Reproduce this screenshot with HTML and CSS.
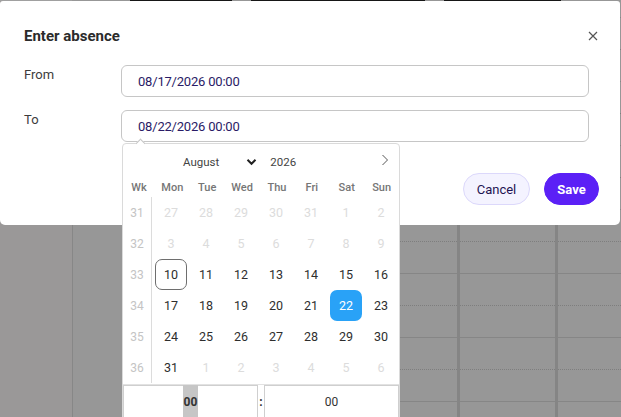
FILE: index.html
```html
<!DOCTYPE html>
<html lang="en">
<head>
<meta charset="UTF-8" />
<meta name="viewport" content="width=device-width, initial-scale=1" />
<title>Enter absence</title>
<link rel="stylesheet" href="styles.css">
</head>
<body>
  <!-- Planner behind the modal -->
  <div class="planner">
    <div class="planner-top">
      <span class="seg seg-light" style="width:72px"></span>
      <span class="seg" style="width:58px"></span>
      <span class="seg seg-dark" style="width:102px"></span>
      <span class="seg" style="width:19px"></span>
      <span class="seg seg-dark" style="width:174px"></span>
      <span class="seg" style="width:19px"></span>
      <span class="seg seg-dark" style="width:117px"></span>
      <span class="seg" style="flex:1"></span>
    </div>
    <div class="planner-body">
      <div class="time-col"></div>
      <div class="day-col day-col-wide">
        <div class="day-blank"></div>
        <div class="day-lines">
          <div class="hour hour-first"></div>
          <div class="hour"></div>
          <div class="hour"></div>
          <div class="hour"></div>
          <div class="hour"></div>
          <div class="hour"></div>
          <div class="hour"></div>
        </div>
      </div>
      <div class="day-col day-col-mid">
        <div class="day-lines">
          <div class="hour hour-first"></div>
          <div class="hour"></div>
          <div class="hour"></div>
          <div class="hour"></div>
          <div class="hour"></div>
          <div class="hour"></div>
          <div class="hour"></div>
        </div>
      </div>
      <div class="day-col day-col-last">
        <div class="day-lines">
          <div class="hour hour-first"></div>
          <div class="hour"></div>
          <div class="hour"></div>
          <div class="hour"></div>
          <div class="hour"></div>
          <div class="hour"></div>
          <div class="hour"></div>
        </div>
      </div>
    </div>
  </div>

  <!-- Modal -->
  <div class="dialog">
    <div class="dialog-header">
      <h2 class="dialog-title">Enter absence</h2>
      <button class="close-btn" aria-label="Close">
        <svg width="10" height="10" viewBox="0 0 10 10"><path d="M1 1L9 9M9 1L1 9" stroke="#555" stroke-width="1.2" fill="none"/></svg>
      </button>
    </div>

    <div class="form">
      <div class="form-row">
        <label class="form-label">From</label>
        <div class="date-input">08/17/2026 00:00</div>
      </div>
      <div class="form-row">
        <label class="form-label">To</label>
        <div class="date-input">08/22/2026 00:00</div>
      </div>
    </div>

    <div class="dialog-footer">
      <button class="btn btn-cancel">Cancel</button>
      <button class="btn btn-save">Save</button>
    </div>
  </div>

  <!-- Date picker popup -->
  <div class="picker">
    <div class="picker-head">
      <div class="month-select">
        <span>August</span>
        <svg width="11" height="8" viewBox="0 0 11 8"><path d="M1.5 1.8L5.5 5.8L9.5 1.8" stroke="#222" stroke-width="2" fill="none"/></svg>
      </div>
      <div class="year">2026</div>
      <svg class="next" width="8" height="12" viewBox="0 0 8 12"><path d="M1.5 1L6.5 6L1.5 11" stroke="#555" stroke-width="1" fill="none"/></svg>
    </div>

    <div class="weekdays">
      <span class="wk">Wk</span>
      <span>Mon</span><span>Tue</span><span>Wed</span><span>Thu</span><span>Fri</span><span>Sat</span><span>Sun</span>
    </div>

    <div class="weeks">
      <div class="week-nums">
        <span>31</span><span>32</span><span>33</span><span>34</span><span>35</span><span>36</span>
      </div>
      <div class="days">
        <span class="off">27</span><span class="off">28</span><span class="off">29</span><span class="off">30</span><span class="off">31</span><span class="off">1</span><span class="off">2</span>
        <span class="off">3</span><span class="off">4</span><span class="off">5</span><span class="off">6</span><span class="off">7</span><span class="off">8</span><span class="off">9</span>
        <span class="today">10</span><span>11</span><span>12</span><span>13</span><span>14</span><span>15</span><span>16</span>
        <span>17</span><span>18</span><span>19</span><span>20</span><span>21</span><span class="selected">22</span><span>23</span>
        <span>24</span><span>25</span><span>26</span><span>27</span><span>28</span><span>29</span><span>30</span>
        <span>31</span><span class="off">1</span><span class="off">2</span><span class="off">3</span><span class="off">4</span><span class="off">5</span><span class="off">6</span>
      </div>
    </div>

    <div class="time-row">
      <div class="time-box"><span class="time-hl">00</span></div>
      <span class="colon">:</span>
      <div class="time-box">00</div>
    </div>
  </div>
</body>
</html>
```

FILE: styles.css
```css
* {
  box-sizing: border-box;
}
body {
  margin: 0;
  width: 621px;
  height: 417px;
  overflow: hidden;
  background-color: #979797;
  font-family: Roboto, 'Liberation Sans', sans-serif;
  color: #333;
  position: relative;
}

/* planner in the background */
.planner {
  display: flex;
  flex-direction: column;
  height: 100%;
}
.planner-top {
  display: flex;
  height: 1px;
}
.seg {
  background-color: #979797;
}
.seg-light {
  background-color: #a0a0a0;
}
.seg-dark {
  background-color: #161616;
}
.planner-body {
  flex: 1;
  display: flex;
}
.time-col {
  width: 73px;
  background-color: #9a9898;
  border-right: 1px solid #878787;
}
.day-col {
  display: flex;
}
.day-col-wide {
  width: 384px;
}
.day-col-mid {
  width: 98px;
  border-left: 3px solid #858585;
}
.day-col-last {
  flex: 1;
  border-left: 3px solid #858585;
}
.day-blank {
  width: 49px;
}
.day-lines {
  flex: 1;
  display: flex;
  flex-direction: column;
}
.hour {
  height: 64px;
  border-bottom: 1px solid #868686;
  position: relative;
}
.hour::after {
  content: '';
  position: absolute;
  left: 0;
  right: 0;
  top: 31px;
  border-top: 1px dotted #7e7e7e;
}
.hour-first {
  height: 17px;
}
.hour-first::after {
  display: none;
}

/* modal */
.dialog {
  position: absolute;
  top: 1px;
  left: 0;
  width: 620px;
  height: 224px;
  background-color: #fff;
  border-radius: 3px 3px 5px 5px;
  display: flex;
  flex-direction: column;
}
.dialog-header {
  display: flex;
  align-items: center;
  justify-content: space-between;
  padding: 25px 20px 0 24px;
}
.dialog-title {
  margin: 0;
  font-size: 15px;
  line-height: 20px;
  font-weight: 700;
  color: #2b2b2b;
}
.close-btn {
  background: none;
  border: none;
  padding: 2px;
  width: 14px;
  height: 14px;
  display: flex;
  align-items: center;
  justify-content: center;
  cursor: pointer;
}
.form {
  display: flex;
  flex-direction: column;
  gap: 13px;
  padding: 19px 31px 0 24px;
}
.form-row {
  display: flex;
  align-items: flex-start;
}
.form-label {
  width: 97px;
  font-size: 13px;
  line-height: 18px;
  padding-top: 1px;
  color: #3c3c3c;
}
.date-input {
  flex: 1;
  height: 32px;
  border: 1px solid #c6c6c6;
  border-radius: 6px;
  padding: 0 16px;
  display: flex;
  align-items: center;
  font-size: 13px;
  letter-spacing: -0.2px;
  color: #2a1b66;
}
.dialog-footer {
  display: flex;
  justify-content: flex-end;
  gap: 14px;
  padding: 31px 21px 0 0;
}
.btn {
  height: 32px;
  border-radius: 16px;
  font-family: Roboto, 'Liberation Sans', sans-serif;
  font-size: 13px;
  cursor: pointer;
}
.btn-cancel {
  width: 67px;
  background-color: #f4f3ff;
  border: 1px solid #dcd8fb;
  color: #1e1452;
  font-weight: 400;
}
.btn-save {
  width: 55px;
  background-color: #5b20f6;
  border: 1px solid #5b20f6;
  color: #fff;
  font-weight: 700;
}

/* date picker */
.picker {
  position: absolute;
  left: 122px;
  top: 143px;
  width: 278px;
  height: 280px;
  background-color: #fff;
  border: 1px solid #dadada;
  border-radius: 4px;
}
.picker::before {
  content: '';
  position: absolute;
  left: 14px;
  top: -4px;
  width: 6px;
  height: 6px;
  background-color: #fff;
  border-left: 1px solid #c6c6c6;
  border-top: 1px solid #c6c6c6;
  transform: rotate(45deg);
}
.picker-head {
  display: flex;
  align-items: center;
  height: 33px;
  padding: 2px 0 0 60px;
  font-size: 11.5px;
  color: #444;
}
.month-select {
  display: flex;
  align-items: center;
  gap: 27px;
}
.year {
  margin-left: 13px;
}
.next {
  margin-left: auto;
  margin-right: 10px;
  margin-top: -4px;
}
.weekdays {
  display: flex;
  height: 20px;
  align-items: center;
  font-size: 11px;
  font-weight: 500;
  color: #767676;
}
.weekdays span {
  width: 35px;
  text-align: center;
}
.weekdays .wk {
  width: 32px;
}
.weeks {
  display: flex;
}
.week-nums {
  width: 32px;
  border-right: 1px solid #dcdcdc;
  display: flex;
  flex-direction: column;
}
.week-nums span {
  height: 31px;
  display: flex;
  align-items: center;
  justify-content: center;
  font-size: 12px;
  color: #c4c4c4;
}
.days {
  display: grid;
  grid-template-columns: repeat(7, 35px);
  padding: 0 0 0 2px;
}
.days span {
  height: 31px;
  display: flex;
  align-items: center;
  justify-content: center;
  font-size: 12.5px;
  color: #2e2e2e;
  border-radius: 7px;
  margin: 0 2px 0 1px;
}
.days .off {
  color: #dcdcdc;
}
.days .today {
  border: 1px solid #6e6e6e;
}
.days .selected {
  background-color: #29a2f7;
  color: #fff;
}
.time-row {
  display: flex;
  align-items: stretch;
  height: 34px;
  margin-top: 1px;
  border-top: 1px solid #e2e2e2;
}
.time-box {
  flex: 1;
  border: 1px solid #cfcfcf;
  display: flex;
  align-items: center;
  justify-content: center;
  font-size: 12px;
  color: #333;
}
.time-hl {
  background-color: #c6c6c6;
  font-weight: 700;
  line-height: 34px;
  padding: 0 1px;
}
.colon {
  width: 6px;
  display: flex;
  align-items: center;
  justify-content: center;
  font-size: 12px;
  font-weight: 700;
}
```
